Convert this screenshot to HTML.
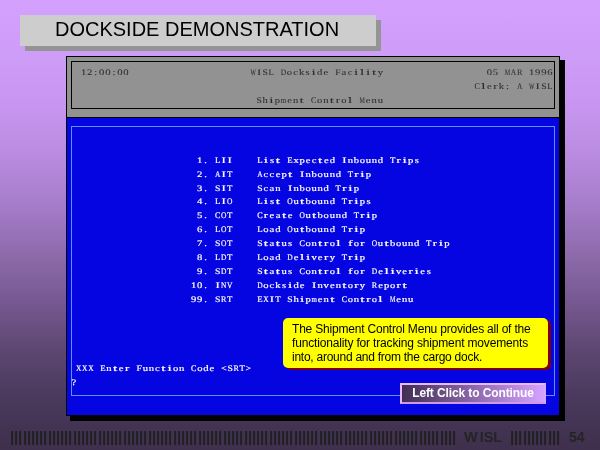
<!DOCTYPE html>
<html><head><meta charset="utf-8"><title>Dockside Demonstration</title>
<style>
html,body{margin:0;padding:0;}
html{width:600px;height:450px;overflow:hidden;}
body{width:600px;height:450px;overflow:hidden;position:relative;
 background:linear-gradient(to bottom,rgb(212,160,254) 0%,rgb(206,157,248) 11.8%,rgb(200,150,240) 22.9%,rgb(186,140,225) 34%,rgb(166,125,203) 45.1%,rgb(143,107,172) 56.2%,rgb(117,88,144) 67.3%,rgb(92,70,112) 78.4%,rgb(72,56,90) 89.6%,rgb(63,48,78) 99.3%);
 font-family:"Liberation Sans",Arial,sans-serif;}
.abs{position:absolute;}
#tshadow{left:25px;top:20px;width:356px;height:31px;background:#949494;}
#tbox{left:20px;top:15px;width:356px;height:31px;background:#cdcdcd;}
#title{left:55.2px;top:14px;height:31px;line-height:31px;font-size:20px;color:#000;white-space:nowrap;will-change:transform;}
#wshadow{left:70px;top:60px;width:495px;height:361px;background:#000;}
#win{left:66px;top:56px;width:492px;height:358px;border:1px solid #000;background:#0505e1;}
#hdr{left:0;top:0;width:492px;height:60px;background:#929292;border-bottom:1px solid #000;}
#hframe{left:4px;top:4px;width:482px;height:46px;border:1px solid #000;}
#bframe{left:4px;top:69px;width:482px;height:268px;border:1px solid #5f91fa;}
#term{position:absolute;left:0;top:0;width:600px;height:450px;}
#term text{font-family:"Liberation Serif","DejaVu Serif",serif;font-size:8.5px;white-space:pre;text-anchor:middle;stroke-width:0.18px;text-rendering:geometricPrecision;}
#term .h{fill:#2c2c2c;stroke:#2c2c2c;stroke-width:0.06px;}
#term .w{fill:#fff;stroke:#fff;}
#term .ft{font-family:"Liberation Sans",Arial,sans-serif;font-weight:bold;font-size:14.5px;fill:#242424;stroke:none;text-anchor:start;}
#call-sh{left:286px;top:320px;width:265px;height:50px;background:#800000;border-radius:5px;}
#call{left:283px;top:318px;width:265px;height:50px;background:#ffff00;border-radius:5px;}
#calltxt{left:291.8px;top:322px;font-size:12px;line-height:14px;color:#000;white-space:nowrap;will-change:transform;}
#btn{left:400px;top:383px;width:142px;height:17px;border:2px solid;border-color:#ecb8ff #d8a6fa #cc9aec #ecb8ff;background:linear-gradient(to right,rgb(64,46,82) 0%,rgb(214,162,255) 100%);}
#btntxt{left:400px;top:383px;letter-spacing:-0.11px;width:146px;height:21px;line-height:21px;text-align:center;color:#fff;font-weight:bold;font-size:12px;white-space:nowrap;will-change:transform;}
.f{position:absolute;top:429px;height:16px;line-height:16px;font-size:14px;font-weight:bold;color:#242424;white-space:nowrap;will-change:transform;}
.b{font-size:15px;letter-spacing:-0.197px;color:#202020;}
.b span{margin-right:1px;}
</style></head><body>
<div class="abs" id="tshadow"></div>
<div class="abs" id="tbox"></div>
<div class="abs" id="title">DOCKSIDE DEMONSTRATION</div>

<div class="abs" id="wshadow"></div>
<div class="abs" id="win">
  <div class="abs" id="hdr"><div class="abs" id="hframe"></div></div>
  <div class="abs" id="bframe"></div>
</div>

<svg id="term" width="600" height="450" viewBox="0 0 600 450">
<g transform="scale(1.25,1)">
<text class="h" y="75" aria-label="12:00:00"><tspan x="66.87 71.72 76.56 81.41 86.25 91.1 95.94 100.79">12:00:00</tspan></text>
<text class="h" y="75" aria-label="WISL Dockside Facility"><tspan x="202.53" textLength="4.32" lengthAdjust="spacingAndGlyphs">W</tspan><tspan x="207.37" textLength="3.44" lengthAdjust="spacingAndGlyphs">I</tspan><tspan x="212.22" textLength="4.32" lengthAdjust="spacingAndGlyphs">S</tspan><tspan x="217.06" textLength="4.32" lengthAdjust="spacingAndGlyphs">L</tspan><tspan x="221.91"> </tspan><tspan x="226.75" textLength="4.32" lengthAdjust="spacingAndGlyphs">D</tspan><tspan x="231.6 236.44 241.28 246.13">ocks</tspan><tspan x="250.97" textLength="3.44" lengthAdjust="spacingAndGlyphs">i</tspan><tspan x="255.82 260.66 265.51">de </tspan><tspan x="270.35" textLength="4.32" lengthAdjust="spacingAndGlyphs">F</tspan><tspan x="275.2 280.04">ac</tspan><tspan x="284.89" textLength="3.44" lengthAdjust="spacingAndGlyphs">i</tspan><tspan x="289.73" textLength="3.44" lengthAdjust="spacingAndGlyphs">l</tspan><tspan x="294.58" textLength="3.44" lengthAdjust="spacingAndGlyphs">i</tspan><tspan x="299.42" textLength="3.44" lengthAdjust="spacingAndGlyphs">t</tspan><tspan x="304.27">y</tspan></text>
<text class="h" y="75" aria-label="05 MAR 1996"><tspan x="391.47 396.32 401.16">05 </tspan><tspan x="406.01" textLength="4.32" lengthAdjust="spacingAndGlyphs">M</tspan><tspan x="410.85" textLength="4.32" lengthAdjust="spacingAndGlyphs">A</tspan><tspan x="415.7" textLength="4.32" lengthAdjust="spacingAndGlyphs">R</tspan><tspan x="420.54 425.39 430.23 435.08 439.92"> 1996</tspan></text>
<text class="h" y="89" aria-label="Clerk: A WISL"><tspan x="381.78" textLength="4.32" lengthAdjust="spacingAndGlyphs">C</tspan><tspan x="386.63" textLength="3.44" lengthAdjust="spacingAndGlyphs">l</tspan><tspan x="391.47">e</tspan><tspan x="396.32" textLength="3.44" lengthAdjust="spacingAndGlyphs">r</tspan><tspan x="401.16 406.01 410.85">k: </tspan><tspan x="415.7" textLength="4.32" lengthAdjust="spacingAndGlyphs">A</tspan><tspan x="420.54"> </tspan><tspan x="425.39" textLength="4.32" lengthAdjust="spacingAndGlyphs">W</tspan><tspan x="430.23" textLength="3.44" lengthAdjust="spacingAndGlyphs">I</tspan><tspan x="435.08" textLength="4.32" lengthAdjust="spacingAndGlyphs">S</tspan><tspan x="439.92" textLength="4.32" lengthAdjust="spacingAndGlyphs">L</tspan></text>
<text class="h" y="103" aria-label="Shipment Control Menu"><tspan x="207.37" textLength="4.32" lengthAdjust="spacingAndGlyphs">S</tspan><tspan x="212.22">h</tspan><tspan x="217.06" textLength="3.44" lengthAdjust="spacingAndGlyphs">i</tspan><tspan x="221.91">p</tspan><tspan x="226.75" textLength="4.32" lengthAdjust="spacingAndGlyphs">m</tspan><tspan x="231.6 236.44">en</tspan><tspan x="241.28" textLength="3.44" lengthAdjust="spacingAndGlyphs">t</tspan><tspan x="246.13"> </tspan><tspan x="250.97" textLength="4.32" lengthAdjust="spacingAndGlyphs">C</tspan><tspan x="255.82 260.66">on</tspan><tspan x="265.51" textLength="3.44" lengthAdjust="spacingAndGlyphs">t</tspan><tspan x="270.35" textLength="3.44" lengthAdjust="spacingAndGlyphs">r</tspan><tspan x="275.2">o</tspan><tspan x="280.04" textLength="3.44" lengthAdjust="spacingAndGlyphs">l</tspan><tspan x="284.89"> </tspan><tspan x="289.73" textLength="4.32" lengthAdjust="spacingAndGlyphs">M</tspan><tspan x="294.58 299.42 304.27">enu</tspan></text>
<text class="w" y="163" aria-label="1. LII    List Expected Inbound Trips"><tspan x="154.88 159.7 164.52 169.35"> 1. </tspan><tspan x="174.17" textLength="4.32" lengthAdjust="spacingAndGlyphs">L</tspan><tspan x="179" textLength="3.44" lengthAdjust="spacingAndGlyphs">I</tspan><tspan x="183.82" textLength="3.44" lengthAdjust="spacingAndGlyphs">I</tspan><tspan x="188.64 193.47 198.29 203.12">    </tspan><tspan x="207.94" textLength="4.32" lengthAdjust="spacingAndGlyphs">L</tspan><tspan x="212.76" textLength="3.44" lengthAdjust="spacingAndGlyphs">i</tspan><tspan x="217.59">s</tspan><tspan x="222.41" textLength="3.44" lengthAdjust="spacingAndGlyphs">t</tspan><tspan x="227.24"> </tspan><tspan x="232.06" textLength="4.32" lengthAdjust="spacingAndGlyphs">E</tspan><tspan x="236.88 241.71 246.53 251.36">xpec</tspan><tspan x="256.18" textLength="3.44" lengthAdjust="spacingAndGlyphs">t</tspan><tspan x="261 265.83 270.65">ed </tspan><tspan x="275.48" textLength="3.44" lengthAdjust="spacingAndGlyphs">I</tspan><tspan x="280.3 285.12 289.95 294.77 299.6 304.42 309.24">nbound </tspan><tspan x="314.07" textLength="4.32" lengthAdjust="spacingAndGlyphs">T</tspan><tspan x="318.89" textLength="3.44" lengthAdjust="spacingAndGlyphs">r</tspan><tspan x="323.72" textLength="3.44" lengthAdjust="spacingAndGlyphs">i</tspan><tspan x="328.54 333.36">ps</tspan></text>
<text class="w" y="177" aria-label="2. AIT    Accept Inbound Trip"><tspan x="154.88 159.7 164.52 169.35"> 2. </tspan><tspan x="174.17" textLength="4.32" lengthAdjust="spacingAndGlyphs">A</tspan><tspan x="179" textLength="3.44" lengthAdjust="spacingAndGlyphs">I</tspan><tspan x="183.82" textLength="4.32" lengthAdjust="spacingAndGlyphs">T</tspan><tspan x="188.64 193.47 198.29 203.12">    </tspan><tspan x="207.94" textLength="4.32" lengthAdjust="spacingAndGlyphs">A</tspan><tspan x="212.76 217.59 222.41 227.24">ccep</tspan><tspan x="232.06" textLength="3.44" lengthAdjust="spacingAndGlyphs">t</tspan><tspan x="236.88"> </tspan><tspan x="241.71" textLength="3.44" lengthAdjust="spacingAndGlyphs">I</tspan><tspan x="246.53 251.36 256.18 261 265.83 270.65 275.48">nbound </tspan><tspan x="280.3" textLength="4.32" lengthAdjust="spacingAndGlyphs">T</tspan><tspan x="285.12" textLength="3.44" lengthAdjust="spacingAndGlyphs">r</tspan><tspan x="289.95" textLength="3.44" lengthAdjust="spacingAndGlyphs">i</tspan><tspan x="294.77">p</tspan></text>
<text class="w" y="191" aria-label="3. SIT    Scan Inbound Trip"><tspan x="154.88 159.7 164.52 169.35"> 3. </tspan><tspan x="174.17" textLength="4.32" lengthAdjust="spacingAndGlyphs">S</tspan><tspan x="179" textLength="3.44" lengthAdjust="spacingAndGlyphs">I</tspan><tspan x="183.82" textLength="4.32" lengthAdjust="spacingAndGlyphs">T</tspan><tspan x="188.64 193.47 198.29 203.12">    </tspan><tspan x="207.94" textLength="4.32" lengthAdjust="spacingAndGlyphs">S</tspan><tspan x="212.76 217.59 222.41 227.24">can </tspan><tspan x="232.06" textLength="3.44" lengthAdjust="spacingAndGlyphs">I</tspan><tspan x="236.88 241.71 246.53 251.36 256.18 261 265.83">nbound </tspan><tspan x="270.65" textLength="4.32" lengthAdjust="spacingAndGlyphs">T</tspan><tspan x="275.48" textLength="3.44" lengthAdjust="spacingAndGlyphs">r</tspan><tspan x="280.3" textLength="3.44" lengthAdjust="spacingAndGlyphs">i</tspan><tspan x="285.12">p</tspan></text>
<text class="w" y="204" aria-label="4. LIO    List Outbound Trips"><tspan x="154.88 159.7 164.52 169.35"> 4. </tspan><tspan x="174.17" textLength="4.32" lengthAdjust="spacingAndGlyphs">L</tspan><tspan x="179" textLength="3.44" lengthAdjust="spacingAndGlyphs">I</tspan><tspan x="183.82" textLength="4.32" lengthAdjust="spacingAndGlyphs">O</tspan><tspan x="188.64 193.47 198.29 203.12">    </tspan><tspan x="207.94" textLength="4.32" lengthAdjust="spacingAndGlyphs">L</tspan><tspan x="212.76" textLength="3.44" lengthAdjust="spacingAndGlyphs">i</tspan><tspan x="217.59">s</tspan><tspan x="222.41" textLength="3.44" lengthAdjust="spacingAndGlyphs">t</tspan><tspan x="227.24"> </tspan><tspan x="232.06" textLength="4.32" lengthAdjust="spacingAndGlyphs">O</tspan><tspan x="236.88">u</tspan><tspan x="241.71" textLength="3.44" lengthAdjust="spacingAndGlyphs">t</tspan><tspan x="246.53 251.36 256.18 261 265.83 270.65">bound </tspan><tspan x="275.48" textLength="4.32" lengthAdjust="spacingAndGlyphs">T</tspan><tspan x="280.3" textLength="3.44" lengthAdjust="spacingAndGlyphs">r</tspan><tspan x="285.12" textLength="3.44" lengthAdjust="spacingAndGlyphs">i</tspan><tspan x="289.95 294.77">ps</tspan></text>
<text class="w" y="218" aria-label="5. COT    Create Outbound Trip"><tspan x="154.88 159.7 164.52 169.35"> 5. </tspan><tspan x="174.17" textLength="4.32" lengthAdjust="spacingAndGlyphs">C</tspan><tspan x="179" textLength="4.32" lengthAdjust="spacingAndGlyphs">O</tspan><tspan x="183.82" textLength="4.32" lengthAdjust="spacingAndGlyphs">T</tspan><tspan x="188.64 193.47 198.29 203.12">    </tspan><tspan x="207.94" textLength="4.32" lengthAdjust="spacingAndGlyphs">C</tspan><tspan x="212.76" textLength="3.44" lengthAdjust="spacingAndGlyphs">r</tspan><tspan x="217.59 222.41">ea</tspan><tspan x="227.24" textLength="3.44" lengthAdjust="spacingAndGlyphs">t</tspan><tspan x="232.06 236.88">e </tspan><tspan x="241.71" textLength="4.32" lengthAdjust="spacingAndGlyphs">O</tspan><tspan x="246.53">u</tspan><tspan x="251.36" textLength="3.44" lengthAdjust="spacingAndGlyphs">t</tspan><tspan x="256.18 261 265.83 270.65 275.48 280.3">bound </tspan><tspan x="285.12" textLength="4.32" lengthAdjust="spacingAndGlyphs">T</tspan><tspan x="289.95" textLength="3.44" lengthAdjust="spacingAndGlyphs">r</tspan><tspan x="294.77" textLength="3.44" lengthAdjust="spacingAndGlyphs">i</tspan><tspan x="299.6">p</tspan></text>
<text class="w" y="232" aria-label="6. LOT    Load Outbound Trip"><tspan x="154.88 159.7 164.52 169.35"> 6. </tspan><tspan x="174.17" textLength="4.32" lengthAdjust="spacingAndGlyphs">L</tspan><tspan x="179" textLength="4.32" lengthAdjust="spacingAndGlyphs">O</tspan><tspan x="183.82" textLength="4.32" lengthAdjust="spacingAndGlyphs">T</tspan><tspan x="188.64 193.47 198.29 203.12">    </tspan><tspan x="207.94" textLength="4.32" lengthAdjust="spacingAndGlyphs">L</tspan><tspan x="212.76 217.59 222.41 227.24">oad </tspan><tspan x="232.06" textLength="4.32" lengthAdjust="spacingAndGlyphs">O</tspan><tspan x="236.88">u</tspan><tspan x="241.71" textLength="3.44" lengthAdjust="spacingAndGlyphs">t</tspan><tspan x="246.53 251.36 256.18 261 265.83 270.65">bound </tspan><tspan x="275.48" textLength="4.32" lengthAdjust="spacingAndGlyphs">T</tspan><tspan x="280.3" textLength="3.44" lengthAdjust="spacingAndGlyphs">r</tspan><tspan x="285.12" textLength="3.44" lengthAdjust="spacingAndGlyphs">i</tspan><tspan x="289.95">p</tspan></text>
<text class="w" y="246" aria-label="7. SOT    Status Control for Outbound Trip"><tspan x="154.88 159.7 164.52 169.35"> 7. </tspan><tspan x="174.17" textLength="4.32" lengthAdjust="spacingAndGlyphs">S</tspan><tspan x="179" textLength="4.32" lengthAdjust="spacingAndGlyphs">O</tspan><tspan x="183.82" textLength="4.32" lengthAdjust="spacingAndGlyphs">T</tspan><tspan x="188.64 193.47 198.29 203.12">    </tspan><tspan x="207.94" textLength="4.32" lengthAdjust="spacingAndGlyphs">S</tspan><tspan x="212.76" textLength="3.44" lengthAdjust="spacingAndGlyphs">t</tspan><tspan x="217.59">a</tspan><tspan x="222.41" textLength="3.44" lengthAdjust="spacingAndGlyphs">t</tspan><tspan x="227.24 232.06 236.88">us </tspan><tspan x="241.71" textLength="4.32" lengthAdjust="spacingAndGlyphs">C</tspan><tspan x="246.53 251.36">on</tspan><tspan x="256.18" textLength="3.44" lengthAdjust="spacingAndGlyphs">t</tspan><tspan x="261" textLength="3.44" lengthAdjust="spacingAndGlyphs">r</tspan><tspan x="265.83">o</tspan><tspan x="270.65" textLength="3.44" lengthAdjust="spacingAndGlyphs">l</tspan><tspan x="275.48"> </tspan><tspan x="280.3" textLength="3.44" lengthAdjust="spacingAndGlyphs">f</tspan><tspan x="285.12">o</tspan><tspan x="289.95" textLength="3.44" lengthAdjust="spacingAndGlyphs">r</tspan><tspan x="294.77"> </tspan><tspan x="299.6" textLength="4.32" lengthAdjust="spacingAndGlyphs">O</tspan><tspan x="304.42">u</tspan><tspan x="309.24" textLength="3.44" lengthAdjust="spacingAndGlyphs">t</tspan><tspan x="314.07 318.89 323.72 328.54 333.36 338.19">bound </tspan><tspan x="343.01" textLength="4.32" lengthAdjust="spacingAndGlyphs">T</tspan><tspan x="347.84" textLength="3.44" lengthAdjust="spacingAndGlyphs">r</tspan><tspan x="352.66" textLength="3.44" lengthAdjust="spacingAndGlyphs">i</tspan><tspan x="357.48">p</tspan></text>
<text class="w" y="260" aria-label="8. LDT    Load Delivery Trip"><tspan x="154.88 159.7 164.52 169.35"> 8. </tspan><tspan x="174.17" textLength="4.32" lengthAdjust="spacingAndGlyphs">L</tspan><tspan x="179" textLength="4.32" lengthAdjust="spacingAndGlyphs">D</tspan><tspan x="183.82" textLength="4.32" lengthAdjust="spacingAndGlyphs">T</tspan><tspan x="188.64 193.47 198.29 203.12">    </tspan><tspan x="207.94" textLength="4.32" lengthAdjust="spacingAndGlyphs">L</tspan><tspan x="212.76 217.59 222.41 227.24">oad </tspan><tspan x="232.06" textLength="4.32" lengthAdjust="spacingAndGlyphs">D</tspan><tspan x="236.88">e</tspan><tspan x="241.71" textLength="3.44" lengthAdjust="spacingAndGlyphs">l</tspan><tspan x="246.53" textLength="3.44" lengthAdjust="spacingAndGlyphs">i</tspan><tspan x="251.36 256.18">ve</tspan><tspan x="261" textLength="3.44" lengthAdjust="spacingAndGlyphs">r</tspan><tspan x="265.83 270.65">y </tspan><tspan x="275.48" textLength="4.32" lengthAdjust="spacingAndGlyphs">T</tspan><tspan x="280.3" textLength="3.44" lengthAdjust="spacingAndGlyphs">r</tspan><tspan x="285.12" textLength="3.44" lengthAdjust="spacingAndGlyphs">i</tspan><tspan x="289.95">p</tspan></text>
<text class="w" y="274" aria-label="9. SDT    Status Control for Deliveries"><tspan x="154.88 159.7 164.52 169.35"> 9. </tspan><tspan x="174.17" textLength="4.32" lengthAdjust="spacingAndGlyphs">S</tspan><tspan x="179" textLength="4.32" lengthAdjust="spacingAndGlyphs">D</tspan><tspan x="183.82" textLength="4.32" lengthAdjust="spacingAndGlyphs">T</tspan><tspan x="188.64 193.47 198.29 203.12">    </tspan><tspan x="207.94" textLength="4.32" lengthAdjust="spacingAndGlyphs">S</tspan><tspan x="212.76" textLength="3.44" lengthAdjust="spacingAndGlyphs">t</tspan><tspan x="217.59">a</tspan><tspan x="222.41" textLength="3.44" lengthAdjust="spacingAndGlyphs">t</tspan><tspan x="227.24 232.06 236.88">us </tspan><tspan x="241.71" textLength="4.32" lengthAdjust="spacingAndGlyphs">C</tspan><tspan x="246.53 251.36">on</tspan><tspan x="256.18" textLength="3.44" lengthAdjust="spacingAndGlyphs">t</tspan><tspan x="261" textLength="3.44" lengthAdjust="spacingAndGlyphs">r</tspan><tspan x="265.83">o</tspan><tspan x="270.65" textLength="3.44" lengthAdjust="spacingAndGlyphs">l</tspan><tspan x="275.48"> </tspan><tspan x="280.3" textLength="3.44" lengthAdjust="spacingAndGlyphs">f</tspan><tspan x="285.12">o</tspan><tspan x="289.95" textLength="3.44" lengthAdjust="spacingAndGlyphs">r</tspan><tspan x="294.77"> </tspan><tspan x="299.6" textLength="4.32" lengthAdjust="spacingAndGlyphs">D</tspan><tspan x="304.42">e</tspan><tspan x="309.24" textLength="3.44" lengthAdjust="spacingAndGlyphs">l</tspan><tspan x="314.07" textLength="3.44" lengthAdjust="spacingAndGlyphs">i</tspan><tspan x="318.89 323.72">ve</tspan><tspan x="328.54" textLength="3.44" lengthAdjust="spacingAndGlyphs">r</tspan><tspan x="333.36" textLength="3.44" lengthAdjust="spacingAndGlyphs">i</tspan><tspan x="338.19 343.01">es</tspan></text>
<text class="w" y="288" aria-label="10. INV    Dockside Inventory Report"><tspan x="154.88 159.7 164.52 169.35">10. </tspan><tspan x="174.17" textLength="3.44" lengthAdjust="spacingAndGlyphs">I</tspan><tspan x="179" textLength="4.32" lengthAdjust="spacingAndGlyphs">N</tspan><tspan x="183.82" textLength="4.32" lengthAdjust="spacingAndGlyphs">V</tspan><tspan x="188.64 193.47 198.29 203.12">    </tspan><tspan x="207.94" textLength="4.32" lengthAdjust="spacingAndGlyphs">D</tspan><tspan x="212.76 217.59 222.41 227.24">ocks</tspan><tspan x="232.06" textLength="3.44" lengthAdjust="spacingAndGlyphs">i</tspan><tspan x="236.88 241.71 246.53">de </tspan><tspan x="251.36" textLength="3.44" lengthAdjust="spacingAndGlyphs">I</tspan><tspan x="256.18 261 265.83 270.65">nven</tspan><tspan x="275.48" textLength="3.44" lengthAdjust="spacingAndGlyphs">t</tspan><tspan x="280.3">o</tspan><tspan x="285.12" textLength="3.44" lengthAdjust="spacingAndGlyphs">r</tspan><tspan x="289.95 294.77">y </tspan><tspan x="299.6" textLength="4.32" lengthAdjust="spacingAndGlyphs">R</tspan><tspan x="304.42 309.24 314.07">epo</tspan><tspan x="318.89" textLength="3.44" lengthAdjust="spacingAndGlyphs">r</tspan><tspan x="323.72" textLength="3.44" lengthAdjust="spacingAndGlyphs">t</tspan></text>
<text class="w" y="302" aria-label="99. SRT    EXIT Shipment Control Menu"><tspan x="154.88 159.7 164.52 169.35">99. </tspan><tspan x="174.17" textLength="4.32" lengthAdjust="spacingAndGlyphs">S</tspan><tspan x="179" textLength="4.32" lengthAdjust="spacingAndGlyphs">R</tspan><tspan x="183.82" textLength="4.32" lengthAdjust="spacingAndGlyphs">T</tspan><tspan x="188.64 193.47 198.29 203.12">    </tspan><tspan x="207.94" textLength="4.32" lengthAdjust="spacingAndGlyphs">E</tspan><tspan x="212.76" textLength="4.32" lengthAdjust="spacingAndGlyphs">X</tspan><tspan x="217.59" textLength="3.44" lengthAdjust="spacingAndGlyphs">I</tspan><tspan x="222.41" textLength="4.32" lengthAdjust="spacingAndGlyphs">T</tspan><tspan x="227.24"> </tspan><tspan x="232.06" textLength="4.32" lengthAdjust="spacingAndGlyphs">S</tspan><tspan x="236.88">h</tspan><tspan x="241.71" textLength="3.44" lengthAdjust="spacingAndGlyphs">i</tspan><tspan x="246.53">p</tspan><tspan x="251.36" textLength="4.32" lengthAdjust="spacingAndGlyphs">m</tspan><tspan x="256.18 261">en</tspan><tspan x="265.83" textLength="3.44" lengthAdjust="spacingAndGlyphs">t</tspan><tspan x="270.65"> </tspan><tspan x="275.48" textLength="4.32" lengthAdjust="spacingAndGlyphs">C</tspan><tspan x="280.3 285.12">on</tspan><tspan x="289.95" textLength="3.44" lengthAdjust="spacingAndGlyphs">t</tspan><tspan x="294.77" textLength="3.44" lengthAdjust="spacingAndGlyphs">r</tspan><tspan x="299.6">o</tspan><tspan x="304.42" textLength="3.44" lengthAdjust="spacingAndGlyphs">l</tspan><tspan x="309.24"> </tspan><tspan x="314.07" textLength="4.32" lengthAdjust="spacingAndGlyphs">M</tspan><tspan x="318.89 323.72 328.54">enu</tspan></text>
<text class="w" y="371" aria-label="XXX Enter Function Code &lt;SRT&gt;"><tspan x="62.99" textLength="4.32" lengthAdjust="spacingAndGlyphs">X</tspan><tspan x="67.83" textLength="4.32" lengthAdjust="spacingAndGlyphs">X</tspan><tspan x="72.68" textLength="4.32" lengthAdjust="spacingAndGlyphs">X</tspan><tspan x="77.52"> </tspan><tspan x="82.37" textLength="4.32" lengthAdjust="spacingAndGlyphs">E</tspan><tspan x="87.21">n</tspan><tspan x="92.06" textLength="3.44" lengthAdjust="spacingAndGlyphs">t</tspan><tspan x="96.9">e</tspan><tspan x="101.75" textLength="3.44" lengthAdjust="spacingAndGlyphs">r</tspan><tspan x="106.59"> </tspan><tspan x="111.44" textLength="4.32" lengthAdjust="spacingAndGlyphs">F</tspan><tspan x="116.28 121.12 125.97">unc</tspan><tspan x="130.81" textLength="3.44" lengthAdjust="spacingAndGlyphs">t</tspan><tspan x="135.66" textLength="3.44" lengthAdjust="spacingAndGlyphs">i</tspan><tspan x="140.5 145.35 150.19">on </tspan><tspan x="155.04" textLength="4.32" lengthAdjust="spacingAndGlyphs">C</tspan><tspan x="159.88 164.73 169.57 174.42">ode </tspan><tspan x="179.26" textLength="4.32" lengthAdjust="spacingAndGlyphs">&lt;</tspan><tspan x="184.11" textLength="4.32" lengthAdjust="spacingAndGlyphs">S</tspan><tspan x="188.95" textLength="4.32" lengthAdjust="spacingAndGlyphs">R</tspan><tspan x="193.8" textLength="4.32" lengthAdjust="spacingAndGlyphs">T</tspan><tspan x="198.64" textLength="4.32" lengthAdjust="spacingAndGlyphs">&gt;</tspan></text>
<text class="w" y="385" aria-label="?"><tspan x="59.18">?</tspan></text>
</g>
<text class="ft" x="464.09 479.63 483.78 493.13" y="441.7">WISL</text>
</svg>

<div class="abs" id="call-sh"></div>
<div class="abs" id="call"></div>
<div class="abs" id="calltxt"><span style="letter-spacing:-0.2px">The Shipment Control Menu provides all of the</span><br><span style="letter-spacing:-0.165px">functionality for tracking shipment movements</span><br><span style="letter-spacing:-0.255px">into, around and from the cargo dock.</span></div>

<div class="abs" id="btn"></div>
<div class="abs" id="btntxt">Left Click to Continue</div>

<div class="f b" style="left:9.86px"><span>|||</span><span>||||||</span><span>||||||</span><span>||||||</span><span>||||||</span><span>||||||</span><span>||||||</span><span>||||||</span><span>||||||</span><span>|||||</span><span>||||||</span><span>||||||</span><span>||||||</span><span>||||||</span><span>||||||</span><span>||||||</span><span>||||||</span><span>|||||</span>||||</div>
<div class="f b" style="left:509.86px"><span>|||</span><span>||||||</span>|||</div>
<div class="f" style="left:568.5px">54</div>
</body></html>
